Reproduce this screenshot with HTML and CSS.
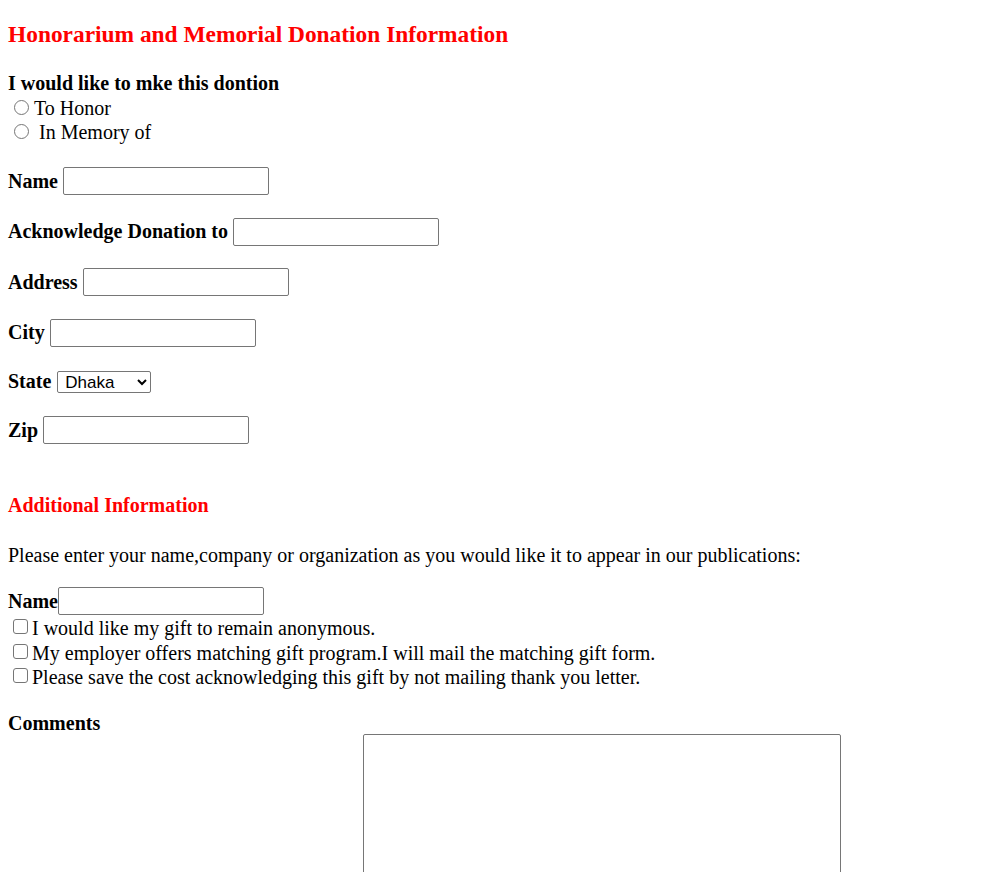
FILE: index.html
```html
<!DOCTYPE html>
<html>
<head>
<meta charset="utf-8">
<title>Honorarium and Memorial Donation Information</title>
<link rel="stylesheet" href="styles.css">
</head>
<body>
<form class="form">
  <h3 class="title">Honorarium and Memorial Donation Information</h3>
  <p class="question">I would like to mke this dontion</p>
  <div class="choices">
    <label class="choice"><input class="radio" type="radio" name="kind"><span class="choice-text">To Honor</span></label>
    <label class="choice"><input class="radio" type="radio" name="kind"><span class="choice-text">&nbsp;In Memory of</span></label>
  </div>

  <div class="row"><span class="field-label">Name</span><input class="text" type="text"></div>
  <div class="row"><span class="field-label">Acknowledge Donation to</span><input class="text" type="text"></div>
  <div class="row"><span class="field-label">Address</span><input class="text" type="text"></div>
  <div class="row"><span class="field-label">City</span><input class="text" type="text"></div>
  <div class="row row-state"><span class="field-label">State</span><select class="select"><option>Dhaka</option><option>Chittagong</option><option>Khulna</option></select></div>
  <div class="row"><span class="field-label">Zip</span><input class="text" type="text"></div>

  <h4 class="subtitle">Additional Information</h4>
  <p class="note">Please enter your name,company or organization as you would like it to appear in our publications:</p>
  <div class="row row-tight"><span class="field-label no-gap">Name</span><input class="text" type="text"></div>
  <div class="checks">
    <label class="check"><input class="box" type="checkbox"><span>I would like my gift to remain anonymous.</span></label>
    <label class="check"><input class="box" type="checkbox"><span>My employer offers matching gift program.I will mail the matching gift form.</span></label>
    <label class="check"><input class="box" type="checkbox"><span>Please save the cost acknowledging this gift by not mailing thank you letter.</span></label>
  </div>
  <p class="comments-label">Comments</p>
  <textarea class="comments"></textarea>
</form>
</body>
</html>
```

FILE: styles.css
```css
html, body {
  margin: 0;
  padding: 0;
  background: #ffffff;
}

body {
  font-family: "Liberation Serif", "Times New Roman", serif;
  font-size: 20px;
  color: #000000;
  line-height: 23px;
}

.form {
  padding: 0 8px;
  display: flex;
  flex-direction: column;
  align-items: flex-start;
}

.title {
  margin: 21px 0 0 0;
  font-size: 23.4px;
  line-height: 27px;
  font-weight: bold;
  color: #ff0000;
}

.question {
  margin: 24px 0 0 0;
  font-weight: bold;
  line-height: 23px;
}

.choices {
  display: flex;
  flex-direction: column;
  margin-top: 1px;
}

.choice {
  display: flex;
  align-items: center;
  height: 24px;
}

.radio {
  appearance: none;
  -webkit-appearance: none;
  box-sizing: border-box;
  width: 15px;
  height: 15px;
  margin: 0 5px 0 6px;
  border: 1px solid #767676;
  border-radius: 50%;
  background: #ffffff;
  position: relative;
  top: -1px;
  flex: none;
}

.row {
  display: flex;
  align-items: center;
  height: 30.5px;
  margin-top: 22px;
}

.row + .row {
  margin-top: 20px;
}

.row-state {
  height: 27px;
}

.field-label {
  font-weight: bold;
  margin-right: 5px;
}

.field-label.no-gap {
  margin-right: 0;
}

.text {
  box-sizing: border-box;
  width: 206px;
  height: 28px;
  margin: 0;
  padding: 1px 3px;
  border: 1px solid #767676;
  border-radius: 2px;
  background: #ffffff;
  font-family: "Liberation Sans", Arial, sans-serif;
  font-size: 16px;
}

.select {
  box-sizing: border-box;
  width: 94px;
  height: 22px;
  margin: 0 0 0 1px;
  padding: 0 0 0 3px;
  border: 1px solid #767676;
  border-radius: 2px;
  background: #ffffff;
  color: #000000;
  font-family: "Liberation Sans", Arial, sans-serif;
  font-size: 17px;
}

.subtitle {
  margin: 48px 0 0 0;
  font-size: 20px;
  line-height: 23px;
  font-weight: bold;
  color: #ff0000;
}

.note {
  margin: 27px 0 0 0;
}

.row.row-tight {
  margin-top: 19px;
  height: 31px;
}

.checks {
  display: flex;
  flex-direction: column;
}

.check {
  display: flex;
  align-items: center;
  height: 24.5px;
}

.box {
  appearance: none;
  -webkit-appearance: none;
  box-sizing: border-box;
  width: 15px;
  height: 15px;
  margin: 0 4px 0 5px;
  border: 1px solid #767676;
  border-radius: 3px;
  background: #ffffff;
  position: relative;
  top: -2px;
  flex: none;
}

.comments-label {
  margin: 22px 0 0 0;
  font-weight: bold;
}

.comments {
  box-sizing: border-box;
  width: 478px;
  height: 200px;
  margin: -1px 0 0 355px;
  border: 1px solid #767676;
  border-radius: 2px;
  background: #ffffff;
  resize: both;
}
```
